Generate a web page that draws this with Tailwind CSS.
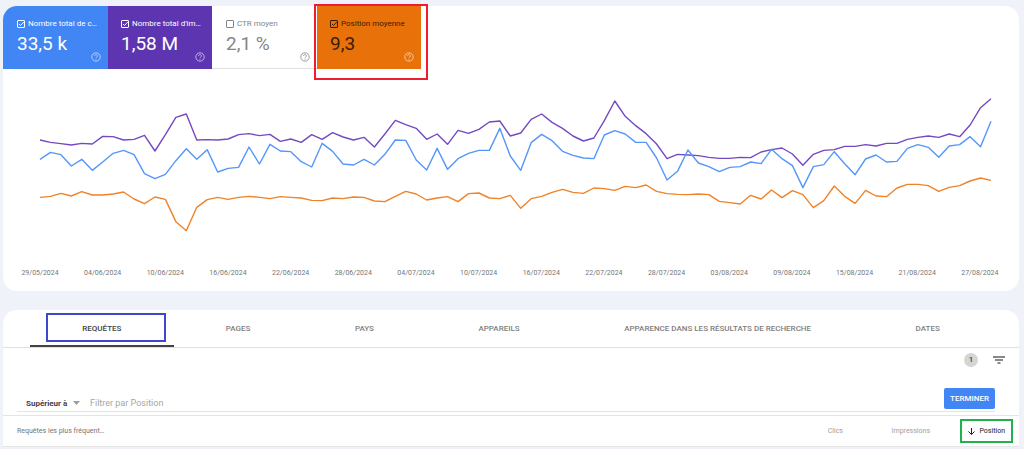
<!DOCTYPE html>
<html lang="fr">
<head>
<meta charset="utf-8">
<meta name="viewport" content="width=device-width, initial-scale=1">
<title>Performances</title>
<script src="https://cdn.jsdelivr.net/npm/@tailwindcss/browser@4"></script>
</head>
<body class="min-h-screen overflow-x-hidden bg-[#eff2f8] font-[Roboto,sans-serif] text-[8px] leading-[10px] text-[#757575]">
<main class="flex flex-col gap-[19px] pt-[6px] pr-[5px] pl-[3px]">

  <section class="rounded-[14px] bg-white pb-[13px]" aria-label="Graphique des performances">
    <div class="flex">
      <div class="relative h-[63px] w-[105px] rounded-tl-[14px] bg-[#4285f4] pt-[13px] pl-[14px] text-white">
        <label class="flex items-center gap-[3px] whitespace-nowrap">
          <span class="relative flex size-[8px]"><input type="checkbox" checked class="peer size-[8px] appearance-none rounded-[1px] border border-current">
          <svg class="pointer-events-none absolute inset-0 hidden size-[8px] peer-checked:block" viewBox="0 0 8 8" fill="none" stroke="currentColor"><path d="M2 4l1.500 1.500L7 1.800"/></svg></span>
          <span>Nombre total de c…</span>
        </label>
        <p class="mt-[5px] text-[19px] leading-[20px]">33,5 k</p>
        <button class="absolute right-[7px] bottom-[7px] opacity-60" aria-label="Aide"><svg class="size-[10px]" viewBox="0 0 10 10" fill="none" stroke="currentColor"><circle cx="5" cy="5" r="4.200"/><path d="M3.600 4a1.400 1.400 0 1 1 2.200 1.100Q5 5.500 5 6.200M5 7v.8"/></svg></button>
      </div>
      <div class="relative h-[63px] w-[104px] bg-[#5e35b1] pt-[13px] pl-[13px] text-white">
        <label class="flex items-center gap-[3px] whitespace-nowrap">
          <span class="relative flex size-[8px]"><input type="checkbox" checked class="peer size-[8px] appearance-none rounded-[1px] border border-current">
          <svg class="pointer-events-none absolute inset-0 hidden size-[8px] peer-checked:block" viewBox="0 0 8 8" fill="none" stroke="currentColor"><path d="M2 4l1.500 1.500L7 1.800"/></svg></span>
          <span>Nombre total d'im…</span>
        </label>
        <p class="mt-[5px] text-[19px] leading-[20px]">1,58 M</p>
        <button class="absolute right-[7px] bottom-[7px] opacity-60" aria-label="Aide"><svg class="size-[10px]" viewBox="0 0 10 10" fill="none" stroke="currentColor"><circle cx="5" cy="5" r="4.200"/><path d="M3.600 4a1.400 1.400 0 1 1 2.200 1.100Q5 5.500 5 6.200M5 7v.8"/></svg></button>
      </div>
      <div class="relative h-[63px] w-[105px] border-b border-[#e0e0e0] bg-white pt-[13px] pl-[14px] text-[#858585]">
        <label class="flex items-center gap-[3px] whitespace-nowrap">
          <span class="relative flex size-[8px]"><input type="checkbox" class="peer size-[8px] appearance-none rounded-[1px] border border-current">
          <svg class="pointer-events-none absolute inset-0 hidden size-[8px] peer-checked:block" viewBox="0 0 8 8" fill="none" stroke="currentColor"><path d="M2 4l1.500 1.500L7 1.800"/></svg></span>
          <span>CTR moyen</span>
        </label>
        <p class="mt-[5px] text-[19px] leading-[20px]">2,1 %</p>
        <button class="absolute right-[7px] bottom-[6px] opacity-80" aria-label="Aide"><svg class="size-[10px]" viewBox="0 0 10 10" fill="none" stroke="currentColor"><circle cx="5" cy="5" r="4.200"/><path d="M3.600 4a1.400 1.400 0 1 1 2.200 1.100Q5 5.500 5 6.200M5 7v.8"/></svg></button>
      </div>
      <div class="relative h-[63px] w-[104px] bg-[#e8710a] pt-[13px] pl-[13px] text-[#3b1d03]">
        <label class="flex items-center gap-[3px] whitespace-nowrap">
          <span class="relative flex size-[8px]"><input type="checkbox" checked class="peer size-[8px] appearance-none rounded-[1px] border border-current">
          <svg class="pointer-events-none absolute inset-0 hidden size-[8px] peer-checked:block" viewBox="0 0 8 8" fill="none" stroke="currentColor"><path d="M2 4l1.500 1.500L7 1.800"/></svg></span>
          <span>Position moyenne</span>
        </label>
        <p class="mt-[5px] text-[19px] leading-[20px]">9,3</p>
        <button class="absolute right-[7px] bottom-[7px] text-white opacity-60" aria-label="Aide"><svg class="size-[10px]" viewBox="0 0 10 10" fill="none" stroke="currentColor"><circle cx="5" cy="5" r="4.200"/><path d="M3.600 4a1.400 1.400 0 1 1 2.200 1.100Q5 5.500 5 6.200M5 7v.8"/></svg></button>
        <div class="pointer-events-none absolute -top-[2px] -right-[7px] -bottom-[11px] -left-[3px] border-2 border-[#ed1c2e]"></div>
      </div>
    </div>

    <div class="mt-[21px] mr-[28px] ml-[37px]">
      <svg class="block h-[150px] w-full overflow-visible" viewBox="0 0 91 450" preserveAspectRatio="none" fill="none" stroke-width="1.400" stroke-linejoin="round" role="img" aria-label="Évolution des impressions, des clics et de la position">
        <polyline id="position" stroke="#ee8329" vector-effect="non-scaling-stroke"/>
        <polyline id="impressions" stroke="#7549c0" vector-effect="non-scaling-stroke"/>
        <polyline id="clics" stroke="#5596fb" vector-effect="non-scaling-stroke"/>
      </svg>
    </div>
    <div class="mt-[28px] mr-[39px] ml-[37px] flex justify-between text-[7px]">
      <span class="flex w-0 justify-center">29/05/2024</span>
      <span class="flex w-0 justify-center">04/06/2024</span>
      <span class="flex w-0 justify-center">10/06/2024</span>
      <span class="flex w-0 justify-center">16/06/2024</span>
      <span class="flex w-0 justify-center">22/06/2024</span>
      <span class="flex w-0 justify-center">28/06/2024</span>
      <span class="flex w-0 justify-center">04/07/2024</span>
      <span class="flex w-0 justify-center">10/07/2024</span>
      <span class="flex w-0 justify-center">16/07/2024</span>
      <span class="flex w-0 justify-center">22/07/2024</span>
      <span class="flex w-0 justify-center">28/07/2024</span>
      <span class="flex w-0 justify-center">03/08/2024</span>
      <span class="flex w-0 justify-center">09/08/2024</span>
      <span class="flex w-0 justify-center">15/08/2024</span>
      <span class="flex w-0 justify-center">21/08/2024</span>
      <span class="flex w-0 justify-center">27/08/2024</span>
    </div>
  </section>

  <section class="rounded-t-[14px] bg-white" aria-label="Tableau des performances">
    <div role="tablist" class="flex h-[38px] border-b border-[#e0e0e0] pr-[27px] pl-[27px] font-medium text-[#808080]">
      <button role="tab" aria-selected="true" class="relative flex-auto text-[#424242]">REQUÊTES
        <span class="pointer-events-none absolute top-[3px] right-[8px] bottom-[5px] left-[16px] border-2 border-[#3f48cc]"></span>
        <span class="pointer-events-none absolute inset-x-0 bottom-0 h-[2px] bg-[#424242]"></span>
      </button>
      <button role="tab" class="flex-auto">PAGES</button>
      <button role="tab" class="flex-auto">PAYS</button>
      <button role="tab" class="flex-auto">APPAREILS</button>
      <button role="tab" class="flex-auto">APPARENCE DANS LES RÉSULTATS DE RECHERCHE</button>
      <button role="tab" class="flex-auto">DATES</button>
    </div>

    <div class="flex items-center justify-end gap-[15px] pt-[5px] pr-[14px]">
      <span class="flex size-[14px] items-center justify-center rounded-full bg-[#d5d5d5] font-medium text-[#424242]">1</span>
      <button aria-label="Filtrer"><svg class="h-[8px] w-[12px]" viewBox="0 0 12 8" stroke="#616161" stroke-width="1.300"><path d="M0 1h12M2 4h8M4.500 7h3"/></svg></button>
    </div>

    <form class="mr-[24px] ml-[14px] flex h-[45px] items-end border-b border-[#e4e4e4]">
      <div class="relative ml-[9px] flex w-[58px] pb-[2px]">
        <select aria-label="Opérateur" class="w-full appearance-none font-bold text-[#424242]"><option>Supérieur à</option></select>
        <svg class="pointer-events-none absolute top-[2px] right-[4px] h-[4px] w-[7px]" viewBox="0 0 7 4" fill="#9e9e9e"><path d="M0 0h7L3.500 4z"/></svg>
      </div>
      <input type="text" aria-label="Valeur du filtre" placeholder="Filtrer par Position" class="ml-[6px] min-w-0 flex-1 pb-[2px] text-[9px] leading-[12px] outline-none placeholder:text-[#a6a6a6]">
      <button type="button" class="mb-[2px] h-[21px] w-[51px] rounded-[2px] bg-[#4285f4] font-medium text-white">TERMINER</button>
    </form>

    <table class="mt-[3px] w-full table-fixed border-y border-[#e4e4e4] text-[7px]">
      <thead>
        <tr class="h-[31px]">
          <th scope="col" class="pl-[14px] text-left font-normal">Requêtes les plus fréquent…</th>
          <th scope="col" class="w-[100px] text-right font-normal text-[#9e9e9e]">Clics</th>
          <th scope="col" class="w-[87px] text-right font-normal text-[#9e9e9e]">Impressions</th>
          <th scope="col" class="w-[89px] pr-[6px] font-normal text-[#212121]">
            <button class="ml-auto flex h-[24px] w-[53px] items-center justify-end gap-[4px] border-2 border-[#22b14c] pr-[6px]">
              <svg class="size-[7px]" viewBox="0 0 7 7" fill="none" stroke="currentColor"><path d="M3.500 0v6.300M.5 3.500l3 3 3-3"/></svg>
              Position
            </button>
          </th>
        </tr>
      </thead>
    </table>
  </section>
</main>
<script>
  // One value per day; a larger value is lower on the chart.
  const series = {
    impressions: [150,157,161,165,160,162,139,140,150,148,136,183,134,82,72,150,149,150,147,134,131,137,133,154,147,157,134,148,128,141,150,142,171,132,91,104,115,148,132,163,121,130,118,96,93,138,129,88,72,97,115,138,153,144,92,33,79,107,131,162,206,193,195,197,202,205,205,202,203,186,179,174,192,226,193,181,179,169,169,164,168,160,160,148,142,138,142,132,140,105,53,26],
    clics: [208,187,194,228,208,241,216,190,181,194,251,266,253,212,176,208,179,246,235,232,171,222,163,183,185,215,231,160,184,222,225,208,225,193,150,151,210,240,175,238,206,190,181,181,115,198,241,158,133,152,184,196,204,206,135,122,132,157,157,204,270,244,180,219,230,245,232,230,216,221,178,206,227,293,230,224,185,221,254,207,195,216,214,175,164,172,202,168,164,140,170,94],
    position: [322,319,310,318,305,315,315,312,306,327,341,321,328,395,422,352,329,322,328,322,319,322,326,320,322,324,331,332,324,326,321,322,333,335,319,304,312,330,324,320,335,311,309,324,326,316,355,326,319,307,298,307,310,294,296,301,289,293,285,304,311,313,314,312,314,334,338,342,316,327,300,323,302,314,353,332,288,319,340,301,318,320,294,283,283,287,304,292,287,273,264,271]
  };
  for (const [id, values] of Object.entries(series)) {
    document.getElementById(id).setAttribute('points', values.map((v, i) => i + ',' + v).join(' '));
  }
</script>
</body>
</html>
